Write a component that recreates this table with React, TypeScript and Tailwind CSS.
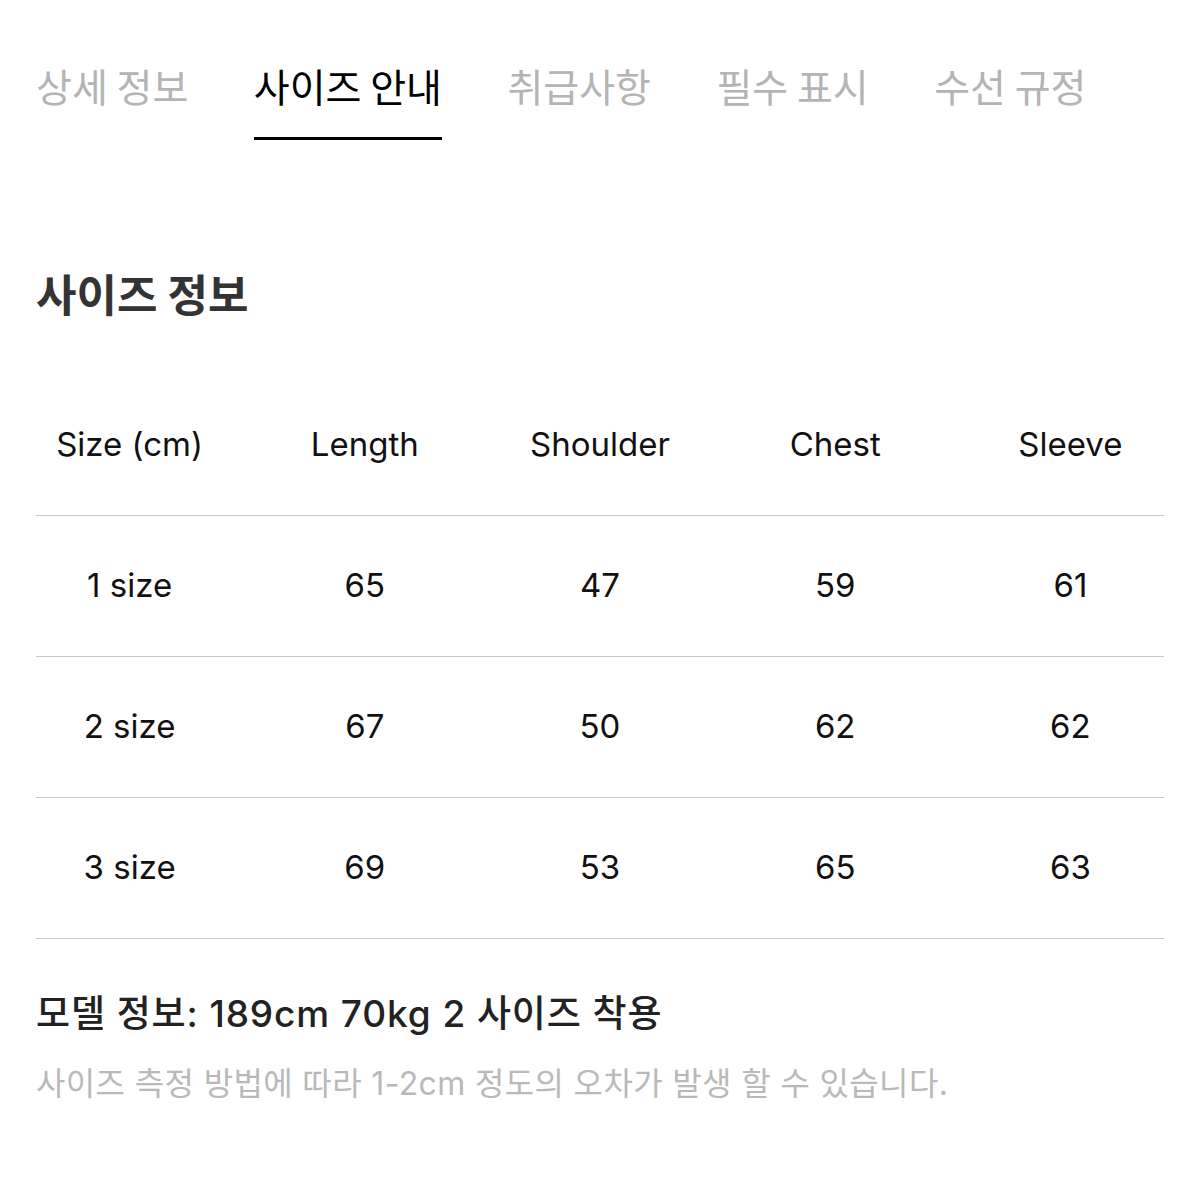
import React from "react";

const tabs = ["상세 정보", "사이즈 안내", "취급사항", "필수 표시", "수선 규정"];

const header = ["Size (cm)", "Length", "Shoulder", "Chest", "Sleeve"];

const rows = [
  ["1 size", "65", "47", "59", "61"],
  ["2 size", "67", "50", "62", "62"],
  ["3 size", "69", "53", "65", "63"],
];

const kr = { fontFamily: '"Noto Sans CJK KR", "Noto Sans", sans-serif' };
const mixed = { fontFamily: 'Inter, "Noto Sans CJK KR", sans-serif' };

const App = () => {
  const active = 1;

  return (
    <div className="min-h-[1196px] w-[1200px] bg-white px-9" style={kr}>
      {/* tabs */}
      <div className="flex gap-[65.5px]">
        {tabs.map((t, i) => (
          <div
            key={t}
            className={`pt-[58px] pb-[25px] text-[39px] leading-[54px] border-b-[3px] ${
              i === active ? "text-black border-black" : "text-[#b4b4b4] border-transparent"
            }`}
          >
            {t}
          </div>
        ))}
      </div>

      <h2 className="mt-[123px] text-[44px] leading-[60px] font-bold text-[#333]">
        사이즈 정보
      </h2>

      <div className="mt-[52px]" style={mixed}>
        {[header, ...rows].map((r, ri) => (
          <div key={ri} className="border-b border-[#c6c6c6]">
            <div className="-mx-6 grid grid-cols-5 h-[140px] items-center text-[33px] text-[#111]">
              {r.map((c, ci) => (
                <div key={ci} className="text-center">
                  {c}
                </div>
              ))}
            </div>
          </div>
        ))}
      </div>

      <div
        className="mt-[51px] text-[37px] leading-[48px] font-medium text-[#222] tracking-[0.9px]"
        style={mixed}
      >
        모델 정보: 189cm 70kg 2 사이즈 착용
      </div>
      <div
        className="mt-[26px] text-[32px] leading-[40px] text-[#b9b9b9] tracking-[0.35px]"
        style={mixed}
      >
        사이즈 측정 방법에 따라 1-2cm 정도의 오차가 발생 할 수 있습니다.
      </div>
    </div>
  );
};

export default App;
